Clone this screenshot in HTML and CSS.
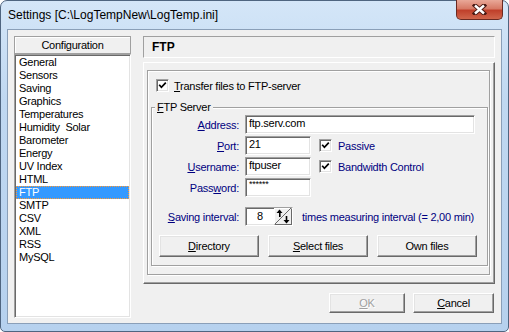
FILE: index.html
```html
<!DOCTYPE html>
<html lang="en">
<head>
  <meta charset="UTF-8" />
  <title>Settings</title>
  <link rel="stylesheet" href="styles.css">
</head>
<body>

  <div class="window">
    <div class="titlebar">
      <span class="title">Settings [C:\LogTempNew\LogTemp.ini]</span>
      <span class="close">
        <svg width="15" height="11" viewBox="0 0 15 11">
          <path d="M3 1.5 L12 9.5 M12 1.5 L3 9.5" stroke="#4a1a14" stroke-width="4.4" stroke-linecap="square" fill="none"/>
          <path d="M3 1.5 L12 9.5 M12 1.5 L3 9.5" stroke="#fff" stroke-width="2.4" fill="none"/>
        </svg>
      </span>
    </div>

    <div class="client">
      <div class="sidebar">
        <div class="side-head">Configuration</div>
        <ul class="pages">
          <li>General</li>
          <li>Sensors</li>
          <li>Saving</li>
          <li>Graphics</li>
          <li>Temperatures</li>
          <li>Humidity&nbsp; Solar</li>
          <li>Barometer</li>
          <li>Energy</li>
          <li>UV Index</li>
          <li>HTML</li>
          <li class="selected">FTP</li>
          <li>SMTP</li>
          <li>CSV</li>
          <li>XML</li>
          <li>RSS</li>
          <li>MySQL</li>
        </ul>
      </div>

      <div class="main">
        <div class="page-head">FTP</div>

        <div class="panel">
          <div class="frame">
            <div class="check-row">
              <span class="check"><svg width="9" height="9" viewBox="0 0 9 9"><path d="M1.2 3.8 L3.4 6.3 L7.8 1.6" fill="none" stroke="#000" stroke-width="1.7"/></svg></span>
              <span><u>T</u>ransfer files to FTP-server</span>
            </div>

            <fieldset class="group">
              <legend><u>F</u>TP Server</legend>

              <div class="row">
                <span class="label"><u>A</u>ddress:</span>
                <span class="field wide">ftp.serv.com</span>
              </div>
              <div class="row">
                <span class="label"><u>P</u>ort:</span>
                <span class="field">21</span>
                <span class="check gap"><svg width="9" height="9" viewBox="0 0 9 9"><path d="M1.2 3.8 L3.4 6.3 L7.8 1.6" fill="none" stroke="#000" stroke-width="1.7"/></svg></span>
                <span class="blue">Passive</span>
              </div>
              <div class="row">
                <span class="label"><u>U</u>sername:</span>
                <span class="field">ftpuser</span>
                <span class="check gap"><svg width="9" height="9" viewBox="0 0 9 9"><path d="M1.2 3.8 L3.4 6.3 L7.8 1.6" fill="none" stroke="#000" stroke-width="1.7"/></svg></span>
                <span class="blue">Bandwidth Control</span>
              </div>
              <div class="row last">
                <span class="label">Pass<u>w</u>ord:</span>
                <span class="field secret">******</span>
              </div>

              <div class="row interval">
                <span class="label"><u>S</u>aving interval:</span>
                <span class="spin">
                  <span class="spin-value">8</span>
                  <span class="spin-btn">
                    <svg width="18" height="17" viewBox="0 0 18 17">
                      <path d="M1 16 L17 0" stroke="#696969" stroke-width="1"/>
                      <path d="M5.5 1.5 L2.5 5 L8.5 5 Z" fill="#000"/>
                      <rect x="5" y="5" width="1.6" height="4" fill="#000"/>
                      <path d="M12.5 15.5 L9.5 12 L15.5 12 Z" fill="#000"/>
                      <rect x="11.7" y="8" width="1.6" height="4" fill="#000"/>
                    </svg>
                  </span>
                </span>
                <span class="blue note">times measuring interval (= 2,00 min)</span>
              </div>

              <div class="actions">
                <span class="button"><u>D</u>irectory</span>
                <span class="button"><u>S</u>elect files</span>
                <span class="button">Own files</span>
              </div>
            </fieldset>
          </div>
        </div>

        <div class="dialog-buttons">
          <span class="button ok disabled"><u>O</u>K</span>
          <span class="button cancel"><u>C</u>ancel</span>
        </div>
      </div>
    </div>
  </div>

</body>
</html>
```

FILE: styles.css
```css
* {
  box-sizing: border-box;
}

body {
  margin: 0;
  width: 509px;
  height: 332px;
  overflow: hidden;
  font-family: "Liberation Sans", Arial, sans-serif;
  font-size: 11px;
  letter-spacing: -0.25px;
  color: #000;
  background: #fff;
}

u {
  text-decoration-thickness: 1px;
  text-underline-offset: 1px;
}

.window {
  width: 509px;
  height: 332px;
  display: flex;
  flex-direction: column;
  border: 1px solid #4f6580;
  border-radius: 7px 7px 5px 5px;
  background: linear-gradient(180deg, #d4e6f8 0%, #c0d8f1 30%, #b6d1ee 100%);
}

.titlebar {
  height: 28px;
  flex-shrink: 0;
  display: flex;
  justify-content: space-between;
}

.title {
  padding-left: 7px;
  line-height: 28px;
  font-size: 12px;
  letter-spacing: 0;
}

.close {
  width: 47px;
  height: 20px;
  margin-right: 5px;
  margin-top: -1px;
  display: flex;
  align-items: center;
  justify-content: center;
  border: 1px solid #6a2a22;
  border-top: none;
  border-radius: 0 0 5px 5px;
  background: linear-gradient(180deg, #e9a898 0%, #d77a66 45%, #c0402b 55%, #d0664c 100%);
}

.client {
  flex: 1;
  margin: 0 6px 7px;
  border: 1px solid #8a9fb8;
  background: #f0f0f0;
  padding: 6px 6px 5px;
  display: flex;
  gap: 12px;
}

/* left list */

.sidebar {
  width: 117px;
  display: flex;
  flex-direction: column;
}

.side-head {
  height: 18px;
  line-height: 16px;
  text-align: center;
  border: 1px solid #a0a0a0;
  box-shadow: inset 1px 1px 0 #fff;
}

.pages {
  flex: 1;
  margin: 0;
  padding: 1px 0 0;
  list-style: none;
  background: #fff;
  border: 1px solid;
  border-color: #a0a0a0 #fff #fff #a0a0a0;
  box-shadow: inset 1px 1px 0 #696969, inset -1px -1px 0 #e3e3e3;
}

.pages li {
  height: 13px;
  line-height: 13px;
  margin-left: 1px;
  margin-right: 1px;
  padding-left: 3px;
  white-space: nowrap;
}

.pages li.selected {
  background: #3399ff;
  color: #fff;
  outline: 1px dotted #ff9a33;
  outline-offset: -1px;
}

/* right page */

.main {
  width: 352px;
  display: flex;
  flex-direction: column;
}

.page-head {
  height: 22px;
  line-height: 20px;
  padding-left: 8px;
  font-size: 12px;
  font-weight: bold;
  letter-spacing: 0;
  border: 1px solid;
  border-color: #a0a0a0 #fff #fff #a0a0a0;
}

.panel {
  height: 222px;
  margin-top: 4px;
  padding: 7px 4px 8px 3px;
  display: flex;
  flex-direction: column;
  border: 1px solid;
  border-color: #fff #696969 #696969 #fff;
  box-shadow: inset -1px -1px 0 #a0a0a0;
}

.frame {
  flex: 1;
  padding: 8px 1px 0 3px;
  border: 1px solid #a0a0a0;
  box-shadow: 1px 1px 0 #fff, inset 1px 1px 0 #fff;
}

.check-row {
  height: 13px;
  margin-left: 5px;
  display: flex;
  align-items: center;
  gap: 5px;
}

.check {
  width: 13px;
  height: 13px;
  flex-shrink: 0;
  display: flex;
  align-items: center;
  justify-content: center;
  background: #fff;
  border: 1px solid;
  border-color: #a0a0a0 #fff #fff #a0a0a0;
  box-shadow: inset 1px 1px 0 #696969, inset -1px -1px 0 #e3e3e3;
}

.group {
  margin: 9px 0 0;
  padding: 1px 0 8px;
  min-width: 0;
  border: 1px solid #a0a0a0;
  box-shadow: 1px 1px 0 #fff, inset 1px 1px 0 #fff;
}

.group legend {
  margin-left: 3px;
  padding: 0 2px;
  line-height: 13px;
  background: #f0f0f0;
}

.row {
  height: 19px;
  margin-bottom: 2px;
  display: flex;
  align-items: center;
}

.row.last {
  margin-bottom: 10px;
}

.label {
  width: 87px;
  margin-right: 6px;
  text-align: right;
  color: #000080;
  white-space: nowrap;
}

.field {
  width: 66px;
  height: 19px;
  line-height: 15px;
  padding-left: 3px;
  background: #fff;
  border: 1px solid;
  border-color: #a0a0a0 #fff #fff #a0a0a0;
  box-shadow: inset 1px 1px 0 #696969, inset -1px -1px 0 #e3e3e3;
}

.field.wide {
  width: 230px;
}

.field.secret {
  font-size: 9px;
  line-height: 11px;
}

.check.gap {
  margin-left: 8px;
  margin-right: 6px;
}

.blue {
  color: #000080;
}

.row.interval {
  margin-bottom: 9px;
}

.spin {
  width: 48px;
  height: 19px;
  display: flex;
  background: #fff;
  border: 1px solid;
  border-color: #a0a0a0 #fff #fff #a0a0a0;
  box-shadow: inset 1px 1px 0 #696969, inset -1px -1px 0 #e3e3e3;
}

.spin-value {
  width: 28px;
  line-height: 17px;
  text-align: center;
}

.spin-btn {
  width: 18px;
  height: 17px;
  display: flex;
  background: #f0f0f0;
  border: 1px solid;
  border-color: #fff #696969 #696969 #fff;
}

.spin-btn svg {
  margin: -1px;
}

.note {
  margin-left: 9px;
  white-space: nowrap;
}

.actions {
  margin-left: 7px;
  display: flex;
  gap: 9px;
}

.button {
  width: 100px;
  height: 22px;
  display: flex;
  align-items: center;
  justify-content: center;
  background: #f0f0f0;
  border: 1px solid;
  border-color: #fff #696969 #696969 #fff;
  box-shadow: inset -1px -1px 0 #a0a0a0, inset 1px 1px 0 #e3e3e3;
}

.dialog-buttons {
  margin-top: 9px;
  padding-right: 1px;
  display: flex;
  justify-content: flex-end;
  gap: 8px;
}

.dialog-buttons .button {
  height: 20px;
}

.button.ok {
  width: 76px;
}

.button.cancel {
  width: 81px;
}

.button.disabled {
  color: #a0a0a0;
  text-shadow: 1px 1px 0 #fff;
}
```
